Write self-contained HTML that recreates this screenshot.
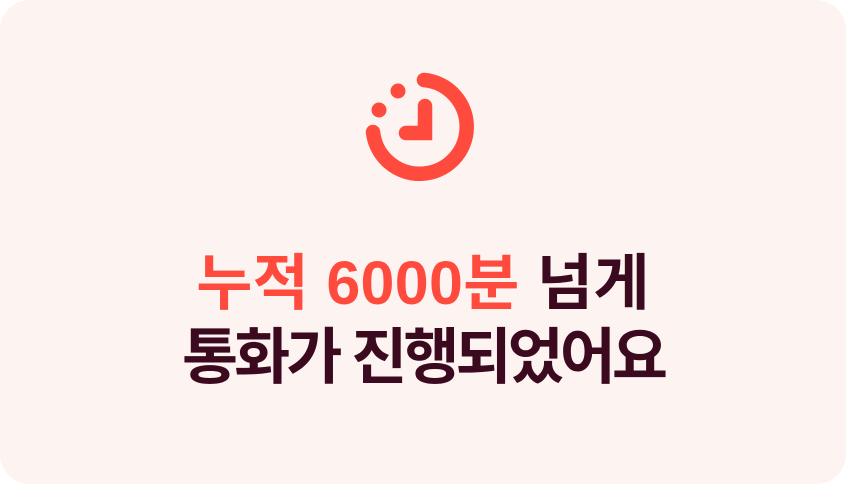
<html><head><style>
body{margin:0;background:#fff;width:846px;height:484px;overflow:hidden}
.c{position:absolute;left:0;top:0;width:846px;height:484px;background:#fdf3f0;border-radius:30px}
.t{position:absolute;left:0;width:846px;text-align:center;font-family:"Liberation Sans","Noto Sans CJK KR",sans-serif;font-weight:700;font-size:61px;color:#3b0a1f;line-height:74px;white-space:nowrap}
.r{color:#ff4b3e}
</style></head><body><div class="c">
<svg width="846" height="484" style="position:absolute;left:0;top:0">
<g fill="none" stroke="#ff4b3e" stroke-width="14.5" stroke-linecap="round">
<path d="M424 80 A47 47 0 1 1 373 132"/>
<path d="M425 106 V133 H406"/>
</g>
<circle cx="379" cy="110" r="7.5" fill="#ff4b3e"/>
<circle cx="398" cy="91" r="7.5" fill="#ff4b3e"/>
</svg>
<div class="t" style="top:246px;letter-spacing:0.3px"><span class="r">누적 6000분</span> 넘게</div>
<div class="t" style="top:320px;letter-spacing:-4px">통화가 진행되었어요</div>
</div></body></html>
